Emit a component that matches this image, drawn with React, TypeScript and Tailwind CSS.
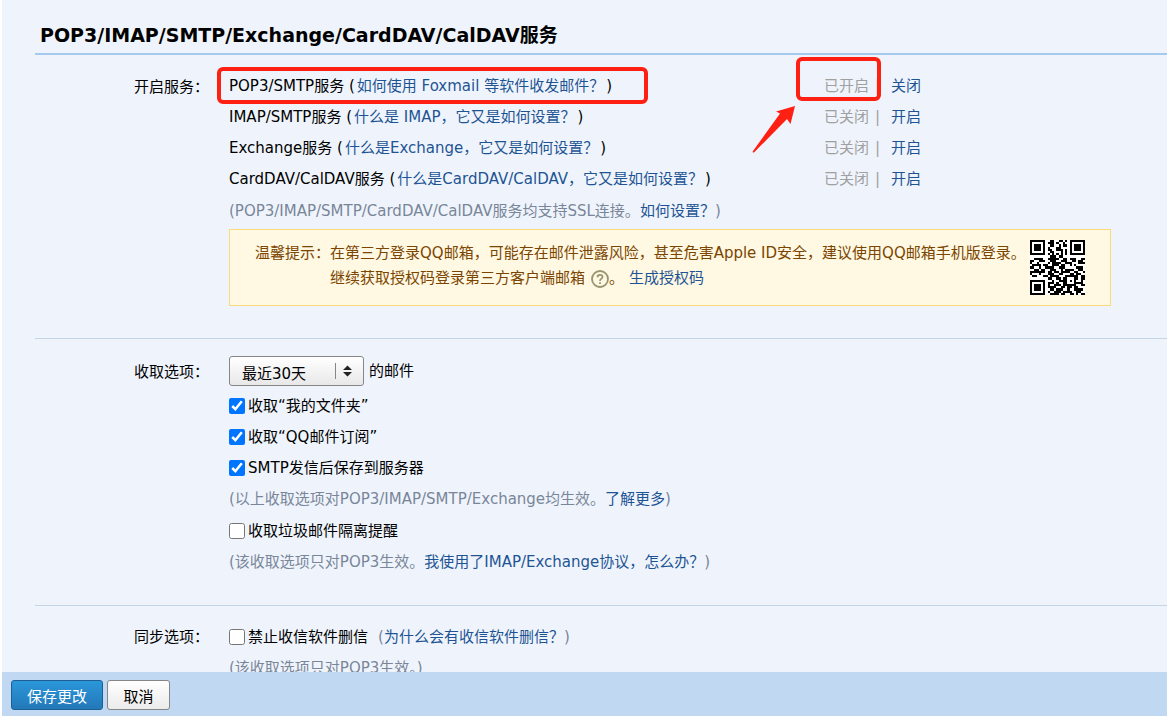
import type { ReactNode } from 'react';

const SERVICES = [
  { name: 'POP3/SMTP服务', help: '如何使用 Foxmail 等软件收发邮件？', on: true },
  { name: 'IMAP/SMTP服务', help: '什么是 IMAP，它又是如何设置？', on: false },
  { name: 'Exchange服务', help: '什么是Exchange，它又是如何设置？', on: false },
  { name: 'CardDAV/CalDAV服务', help: '什么是CardDAV/CalDAV，它又是如何设置？', on: false },
];

// one string per row of modules, # is dark
const QR = [
  '#######..##..##.#.#######',
  '#.....#.###.#..#..#.....#',
  '#.###.#..##..#.##.#.###.#',
  '#.###.#.#...##....#.###.#',
  '#.###.#.##..###.#.#.###.#',
  '#.....#..##...#.#.#.....#',
  '#######.#.#.#.#.#.#######',
  '.........###.##..........',
  '..####..#####..##.###..##',
  '##..###..###..###..##.##.',
  '#..#....#.####..###...###',
  '.####.##..###.##..#.#....',
  '##..#..####..###.....###.',
  '..##.##..###..#.####..##.',
  '#######.##.##.####..##..#',
  '#...#...###..##...##.##..',
  '.##...##.####...######.##',
  '........##..##.##...##.##',
  '#######...#..####.#.#..#.',
  '#.....#.###.#..##...####.',
  '#.###.#.#..###.######..##',
  '#.###.#.####..##.##.##...',
  '#.###.#..##.###..#..####.',
  '#.....#.#..###.####..##..',
  '#######..####.##..##.#.##',
];

function Link({ children }: { children: ReactNode }) {
  return <a href="#" className="text-[#1e5494] hover:underline">{children}</a>;
}

function Section({ label, children }: { label: string; children: ReactNode }) {
  return (
    <section className="flex gap-5">
      <h2 className="w-[174px] shrink-0 pt-px text-right leading-[31px]">{label}</h2>
      <div className="min-w-0 flex-1">{children}</div>
    </section>
  );
}

function Check({ label, checked = false, children }: { label: string; checked?: boolean; children?: ReactNode }) {
  return (
    <div className="flex h-[31px] items-center">
      <label className="flex items-center gap-[3px]">
        <input type="checkbox" defaultChecked={checked} className="size-4 accent-[#0075ff]" />
        <span className="pt-0.5">{label}</span>
      </label>
      {children}
    </div>
  );
}

function Note({ children }: { children: ReactNode }) {
  return <p className="h-8 leading-8 text-[#798699]">{children}</p>;
}

function QrCode() {
  return (
    <svg
      className="size-[55px] shrink-0 bg-white"
      viewBox="0 0 25 25"
      shapeRendering="crispEdges"
      role="img"
      aria-label="QQ邮箱手机版"
    >
      {QR.map((row, y) =>
        [...row].map((c, x) => c === '#' && <rect key={`${x}-${y}`} x={x} y={y} width="1" height="1" />)
      )}
    </svg>
  );
}

export default function App() {
  return (
    <div className="flex h-screen flex-col border-l-2 border-white bg-[#eff4fc] font-['DejaVu_Sans','Noto_Sans_CJK_SC',sans-serif] text-[15px] text-black">
      <main className="min-h-0 flex-1 overflow-hidden pl-[33px]">
        <h1 className="border-b-2 border-[#a6c9ee] pt-[18px] pl-[5px] text-[19px] leading-[35px] font-bold whitespace-nowrap">
          POP3/IMAP/SMTP/Exchange/CardDAV/CalDAV服务
        </h1>

        <div className="border-b border-[#c5d5e5] pt-4 pb-8">
          <Section label="开启服务：">
            <ul>
              {SERVICES.map((s) => (
                <li key={s.name} className="flex h-[31px] items-center whitespace-nowrap">
                  <div className="relative w-[595px] shrink-0">
                    {s.name} (<span className="mx-0.5"><Link>{s.help}</Link></span>)
                    {s.on && <span className="absolute -top-2 -left-3 h-[37px] w-[431px] rounded-md border-4 border-[#ff2014]" />}
                  </div>
                  <div className="relative flex text-[#a0a0a0]">
                    <span className="w-[51px]">{s.on ? '已开启' : '已关闭'}</span>
                    <span className="w-4">|</span>
                    <Link>{s.on ? '关闭' : '开启'}</Link>
                    {s.on && (
                      <>
                        <span className="absolute -top-[18px] -left-7 h-[44px] w-[85px] rounded-md border-4 border-[#ff2014]" />
                        <svg className="absolute top-[30px] -left-[72px] h-12 w-11" viewBox="0 0 44 48" fill="#ff2014">
                          <path d="M43 1 L24 6.500 L28 8.500 L1 46 Q0 48 2 47.500 L35 14 L38.500 19 Z" />
                        </svg>
                      </>
                    )}
                  </div>
                </li>
              ))}
            </ul>
            <p className="h-[34px] leading-[33px] text-[#798699]">
              (POP3/IMAP/SMTP/CardDAV/CalDAV服务均支持SSL连接。<Link>如何设置？</Link>)
            </p>
            <div className="flex max-w-[882px] items-start justify-between border border-[#fbd97d] bg-[#fff8e2] px-[25px] py-[10px] text-[#7b4500]">
              <div className="flex pt-px leading-[25px] whitespace-nowrap">
                <strong className="font-normal">温馨提示：</strong>
                <div>
                  <p>在第三方登录QQ邮箱，可能存在邮件泄露风险，甚至危害Apple ID安全，建议使用QQ邮箱手机版登录。</p>
                  <p className="flex items-center">
                    继续获取授权码登录第三方客户端邮箱
                    <svg className="ml-1.5 size-[18px]" viewBox="0 0 18 18" fill="none" stroke="#9a9470" strokeWidth="1.8">
                      <circle cx="9" cy="9" r="8" />
                      <path d="M6.500 7.200 Q6.500 4.800 9 4.800 Q11.500 4.800 11.500 7 Q11.500 8.200 10 9 Q9 9.600 9 11 M9 12.200 V14" />
                    </svg>
                    <span className="mr-[5px]">。</span>
                    <Link>生成授权码</Link>
                  </p>
                </div>
              </div>
              <QrCode />
            </div>
          </Section>
        </div>

        <div className="border-b border-[#c5d5e5] pt-[17px] pb-[27px]">
          <Section label="收取选项：">
            <div className="mb-1 flex items-center gap-[5px]">
              <div className="relative">
                <select
                  aria-label="收取时间范围"
                  className="h-[30px] w-[135px] appearance-none rounded-[3px] border border-[#868686] bg-linear-to-b from-white to-[#e8e8e8] pt-1.5 pl-3 text-[15px]"
                >
                  <option>最近30天</option>
                </select>
                <svg className="pointer-events-none absolute top-[7px] right-3 h-4 w-[17px]" viewBox="0 0 17 16">
                  <path d="M0.500 0V16" stroke="#868686" />
                  <path d="M12.500 2.500L17 7H8ZM12.500 13.500L17 9H8Z" fill="#222" />
                </svg>
              </div>
              的邮件
            </div>
            <Check label="收取“我的文件夹”" checked />
            <Check label="收取“QQ邮件订阅”" checked />
            <Check label="SMTP发信后保存到服务器" checked />
            <Note>
              (以上收取选项对POP3/IMAP/SMTP/Exchange均生效。<Link>了解更多</Link>)
            </Note>
            <Check label="收取垃圾邮件隔离提醒" />
            <Note>
              (该收取选项只对POP3生效。<Link>我使用了IMAP/Exchange协议，怎么办？</Link>)
            </Note>
          </Section>
        </div>

        <div className="pt-[15px]">
          <Section label="同步选项：">
            <Check label="禁止收信软件删信">
              <span className="ml-2.5 pt-0.5 text-[#798699]">(<Link>为什么会有收信软件删信？</Link>)</span>
            </Check>
            <Note>(该收取选项只对POP3生效。)</Note>
          </Section>
        </div>
      </main>

      <footer className="flex h-11 shrink-0 gap-1 bg-[#c1d8f2] pt-2 pl-[9px]">
        <button type="button" className="h-[30px] w-[92px] rounded-[3px] border border-[#1c5f93] bg-linear-to-b from-[#2b97db] to-[#2378b8] pt-1 text-white">
          保存更改
        </button>
        <button type="button" className="h-[30px] w-[63px] rounded-[3px] border border-[#868686] bg-linear-to-b from-white to-[#ebebeb] pt-1">
          取消
        </button>
      </footer>
    </div>
  );
}
